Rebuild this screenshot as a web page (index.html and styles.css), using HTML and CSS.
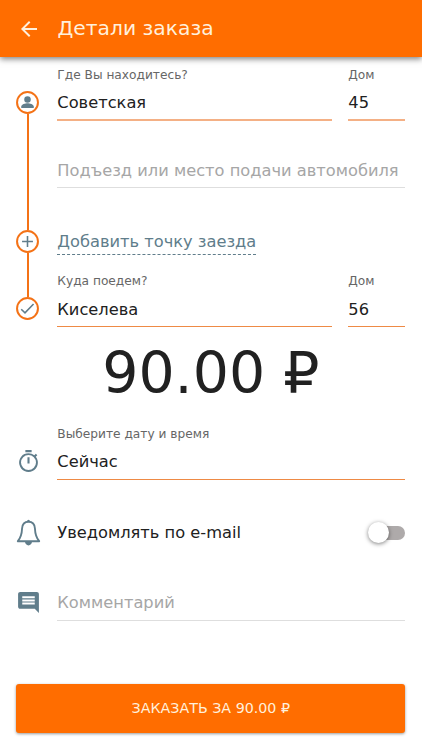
FILE: index.html
```html
<!DOCTYPE html>
<html lang="ru">
<head>
    <meta charset="UTF-8">
    <meta name="viewport" content="width=device-width, initial-scale=1.0">
    <title>Детали заказа</title>
    <link rel="stylesheet" href="styles.css">
</head>
<body>
    <header class="header">
        <svg class="back-icon" viewBox="0 0 24 24"><path d="M20 11H7.8l5.6-5.6L12 4l-8 8 8 8 1.4-1.4L7.8 13H20z"/></svg>
        <h1 class="title">Детали заказа</h1>
    </header>

    <main class="order">
        <section class="route">
            <div class="route-track">
                <div class="route-point">
                    <svg viewBox="0 0 22 22"><circle class="ring" cx="11" cy="11" r="10"/><circle class="fill" cx="11" cy="8.1" r="3.1"/><path class="fill" d="M5 16.2v-1.4c0-2.1 4-3.2 6-3.2s6 1.1 6 3.2v1.4z"/></svg>
                </div>
                <div class="route-line"></div>
                <div class="route-point">
                    <svg viewBox="0 0 22 22"><circle class="ring" cx="11" cy="11" r="10"/><path class="stroke" d="M11 5.8v10.4M5.8 11h10.4"/></svg>
                </div>
                <div class="route-line route-line-short"></div>
                <div class="route-point">
                    <svg viewBox="0 0 22 22"><circle class="ring" cx="11" cy="11" r="10"/><path class="stroke" d="M5 11.7l3.6 3.5 8.2-8.5"/></svg>
                </div>
            </div>
            <div class="route-fields">
                <div class="address address-from">
                    <div class="field street">
                        <div class="label">Где Вы находитесь?</div>
                        <div class="value">Советская</div>
                    </div>
                    <div class="field house">
                        <div class="label">Дом</div>
                        <div class="value">45</div>
                    </div>
                </div>
                <div class="field entrance">
                    <div class="value placeholder">Подъезд или место подачи автомобиля</div>
                </div>
                <a class="add-point">Добавить точку заезда</a>
                <div class="address address-to">
                    <div class="field street">
                        <div class="label">Куда поедем?</div>
                        <div class="value">Киселева</div>
                    </div>
                    <div class="field house">
                        <div class="label">Дом</div>
                        <div class="value">56</div>
                    </div>
                </div>
            </div>
        </section>

        <div class="price">90.00 ₽</div>

        <div class="row row-time">
            <svg class="row-icon icon-time" viewBox="0 0 24 24"><path d="M15 1H9v2h6V1zm-4 13h2V8h-2v6zm8.03-6.61l1.42-1.42c-.43-.51-.9-.99-1.41-1.41l-1.42 1.42A8.96 8.96 0 0 0 12 4a9 9 0 1 0 7.03 3.39zM12 20.2a7.2 7.2 0 1 1 0-14.4 7.2 7.2 0 0 1 0 14.4z"/></svg>
            <div class="field">
                <div class="label">Выберите дату и время</div>
                <div class="value">Сейчас</div>
            </div>
        </div>

        <div class="row row-notify">
            <svg class="row-icon" viewBox="0 0 24 26"><path class="stroke bell" d="M12 2.6c-3.9 0-6 2.800-6.200 6.600-.2 5.200-.9 8.600-4.100 12.200h20.600c-3.200-3.600-3.900-7-4.100-12.200-.2-3.800-2.300-6.600-6.200-6.600z"/><path d="M10.600 2.500a1.400 1.800 0 0 1 2.800 0zM8.600 22h6.800c-.3 2-1.500 3.400-3.400 3.400S8.900 24 8.600 22z"/></svg>
            <div class="notify-text">Уведомлять по e-mail</div>
            <div class="switch"><div class="switch-thumb"></div></div>
        </div>

        <div class="row row-comment">
            <svg class="row-icon icon-comment" viewBox="0 0 24 24"><path d="M21.99 4c0-1.1-.89-2-1.99-2H4c-1.1 0-2 .9-2 2v12c0 1.1.9 2 2 2h14l4 4-.01-18zM18 14H6v-2h12v2zm0-3H6V9h12v2zm0-3H6V6h12v2z"/></svg>
            <div class="field">
                <div class="value placeholder">Комментарий</div>
            </div>
        </div>

        <button class="submit">ЗАКАЗАТЬ ЗА 90.00 ₽</button>
    </main>
</body>
</html>
```

FILE: styles.css
```css
* {
    box-sizing: border-box;
}

body {
    margin: 0;
    height: 750px;
    display: flex;
    flex-direction: column;
    overflow: hidden;
    font-family: "DejaVu Sans", sans-serif;
    font-size: 16.25px;
    color: #212121;
    background-color: #fff;
}

svg {
    display: block;
    fill: #607d8b;
}

.header {
    height: 57px;
    flex: none;
    display: flex;
    align-items: center;
    padding-left: 17px;
    background-color: #ff6d00;
    box-shadow: 0 2px 6px rgba(0, 0, 0, 0.5);
    color: #fff0dc;
}

.back-icon {
    width: 24px;
    height: 24px;
    margin-right: 16.4px;
    fill: #fff0dc;
}

.title {
    margin: 0;
    font-size: 20.3px;
    font-weight: normal;
    line-height: 25px;
}

.order {
    flex: 1;
    display: flex;
    flex-direction: column;
    padding: 0 16.7px 0 16.3px;
}

.route {
    display: flex;
}

.route-track {
    width: 41px;
    flex: none;
    padding-top: 33.5px;
}

.route-point {
    width: 23px;
    height: 23px;
}

.route-line {
    width: 2px;
    height: 116px;
    margin-left: 10.5px;
    background-color: #f47216;
}

.route-line-short {
    height: 44.5px;
}

.ring {
    fill: none;
    stroke: #f47216;
    stroke-width: 1.9;
}

.stroke {
    fill: none;
    stroke: #607d8b;
    stroke-width: 1.5;
}

.bell {
    stroke-width: 1.8;
    stroke-linejoin: round;
}

.route-fields {
    flex: 1;
}

.address {
    display: flex;
    gap: 16px;
    padding-top: 10px;
}

.field {
    flex: 1;
}

.house {
    flex: none;
    width: 57px;
}

.label {
    font-size: 12.2px;
    line-height: 16px;
    color: #666;
}

.value {
    height: 37px;
    padding-top: 4px;
    line-height: 32px;
    border-bottom: 1px solid #ee8a45;
    white-space: nowrap;
}

.address-from .value {
    height: 38px;
    border-bottom: 2px solid #f4b085;
}

.placeholder {
    color: #a6a6a6;
    border-bottom-color: #dedede;
}

.entrance {
    margin-top: 30px;
}

.add-point {
    display: inline-block;
    margin-top: 42px;
    height: 25px;
    line-height: 24px;
    color: #607d8b;
    border-bottom: 1px dashed #607d8b;
}

.address-to {
    padding-top: 18px;
}

.address-to .value {
    height: 38px;
    padding-top: 5px;
}

.price {
    height: 99px;
    line-height: 92px;
    font-size: 56.9px;
    text-align: center;
}

.row {
    display: flex;
}

.row-icon {
    width: 25px;
    height: 25px;
    flex: none;
    margin-right: 16px;
}

.icon-time {
    margin-top: 23px;
}

.row-notify {
    height: 32px;
    margin-top: 36px;
    align-items: center;
}

.row-time .value {
    height: 38px;
}

.row-notify .row-icon {
    height: 27px;
}

.notify-text {
    flex: 1;
}

.switch {
    width: 34px;
    height: 14px;
    margin-top: 1px;
    border-radius: 7px;
    background-color: #aeaaaa;
}

.switch-thumb {
    width: 21px;
    height: 21px;
    margin: -3.5px 0 0 -3px;
    border-radius: 50%;
    background-color: #fff;
    box-shadow: 0 1px 4px rgba(0, 0, 0, 0.5);
}

.row-comment {
    margin-top: 35px;
}

.row-comment .value {
    height: 38px;
}

.icon-comment {
    margin-top: 7px;
}

.submit {
    height: 49px;
    margin: auto 0 17px;
    border: none;
    border-radius: 3px;
    background-color: #ff6d00;
    box-shadow: 0 1px 3px rgba(0, 0, 0, 0.4);
    color: #fff0dc;
    font-family: inherit;
    font-size: 14.25px;
    line-height: 16px;
    padding: 0 0 2px;
}
```
